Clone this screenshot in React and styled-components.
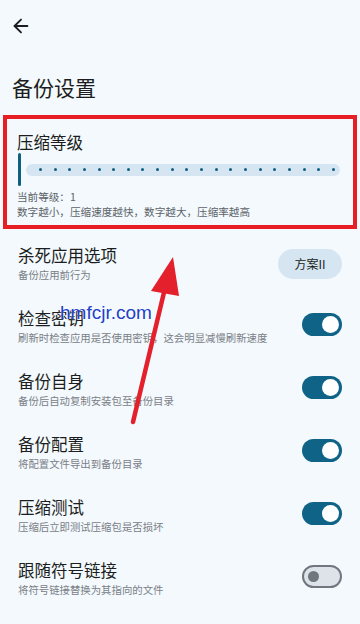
import styled, { createGlobalStyle } from 'styled-components';
import { ArrowLeft } from 'lucide-react';

const GlobalStyle = createGlobalStyle`
  body {
    margin: 0;
    background: #f3f9fd;
    font-family: 'Noto Sans CJK SC', 'Noto Sans', sans-serif;
  }
`;

const options = [
  { title: '检查密钥', desc: '刷新时检查应用是否使用密钥，这会明显减慢刷新速度', on: true },
  { title: '备份自身', desc: '备份后自动复制安装包至备份目录', on: true },
  { title: '备份配置', desc: '将配置文件导出到备份目录', on: true },
  { title: '压缩测试', desc: '压缩后立即测试压缩包是否损坏', on: true },
  { title: '跟随符号链接', desc: '将符号链接替换为其指向的文件', on: false },
];

const App = () => {
  const dots = Array.from({ length: 21 });

  return (
    <StPage>
      <GlobalStyle />
      <StTopBar>
        <ArrowLeft size={22} strokeWidth={2} color='#1b1d20' />
      </StTopBar>
      <StHeading>备份设置</StHeading>

      <StHighlight>
        <StSectionTitle>压缩等级</StSectionTitle>
        <StSlider>
          <StThumb />
          <StTrack>
            {dots.map((_, i) => (
              <StDot key={i} />
            ))}
          </StTrack>
        </StSlider>
        <StHints>
          <div>当前等级：1</div>
          <div>数字越小，压缩速度越快，数字越大，压缩率越高</div>
        </StHints>
      </StHighlight>

      <StList>
        <StRow>
          <StText>
            <StTitle>杀死应用选项</StTitle>
            <StDesc>备份应用前行为</StDesc>
          </StText>
          <StPill>方案II</StPill>
        </StRow>

        {options.map((o) => (
          <StRow key={o.title}>
            <StText>
              <StTitle>{o.title}</StTitle>
              <StDesc>{o.desc}</StDesc>
            </StText>
            <StSwitch $on={o.on}>
              <StKnob $on={o.on} />
            </StSwitch>
          </StRow>
        ))}
      </StList>

      <StWatermark>hmfcjr.com</StWatermark>
      <StArrow width='360' height='624' viewBox='0 0 360 624'>
        <line x1='133' y1='422' x2='166' y2='284' stroke='#e3202b' strokeWidth='4.5' strokeLinecap='round' />
        <polygon points='173,257 151,291 179,296' fill='#e3202b' />
      </StArrow>
    </StPage>
  );
};

export default App;

const StPage = styled.div`
  position: relative;
  width: 360px;
  height: 624px;
  overflow: hidden;
  background: #f3f9fd;
`;

const StTopBar = styled.div`
  display: flex;
  align-items: center;
  height: 52px;
  padding-left: 10px;
`;

const StHeading = styled.h1`
  margin: 0 0 13px;
  padding: 20px 0 0 12px;
  font-size: 21px;
  font-weight: 400;
  line-height: 30px;
  color: #1b1d20;
`;

const StHighlight = styled.div`
  margin: 0 3px;
  border: 4px solid #e81e25;
  padding: 12px 13px 6px 10px;
`;

const StSectionTitle = styled.div`
  font-size: 16.5px;
  line-height: 22px;
  color: #1b1d20;
`;

const StSlider = styled.div`
  display: flex;
  align-items: center;
  gap: 5px;
  height: 33px;
  margin-left: 1px;
`;

const StThumb = styled.div`
  width: 3px;
  height: 33px;
  border-radius: 2px;
  background: #0f5f80;
`;

const StTrack = styled.div`
  flex: 1;
  display: flex;
  align-items: center;
  justify-content: space-between;
  height: 12px;
  padding: 0 5px 0 13px;
  border-radius: 6px;
  background: #d5e5f2;
`;

const StDot = styled.span`
  width: 3px;
  height: 3px;
  border-radius: 50%;
  background: #0f5f80;
`;

const StHints = styled.div`
  margin-top: 4px;
  font-size: 10.6px;
  line-height: 14.5px;
  color: #5d6369;
`;

const StList = styled.div`
  display: flex;
  flex-direction: column;
  margin-top: 3px;
`;

const StRow = styled.div`
  display: flex;
  align-items: center;
  justify-content: space-between;
  height: 63px;
  padding: 0 18px;
`;

const StText = styled.div`
  display: flex;
  flex-direction: column;
  gap: 1px;
`;

const StTitle = styled.div`
  font-size: 16.5px;
  line-height: 22px;
  color: #1b1d20;
`;

const StDesc = styled.div`
  font-size: 10.4px;
  line-height: 16px;
  color: #7a8086;
`;

const StPill = styled.div`
  display: flex;
  align-items: center;
  justify-content: center;
  width: 64px;
  height: 30px;
  border-radius: 15px;
  background: #d5e5f2;
  font-size: 12px;
  color: #1b1d20;
`;

const StSwitch = styled.div`
  display: flex;
  align-items: center;
  justify-content: ${(p) => (p.$on ? 'flex-end' : 'flex-start')};
  box-sizing: border-box;
  width: 40px;
  height: 23px;
  margin-bottom: 5px;
  padding: 0 3px 0 4px;
  border-radius: 12px;
  background: ${(p) => (p.$on ? '#0e6386' : '#dee3ea')};
  border: ${(p) => (p.$on ? 'none' : '2px solid #70777e')};
`;

const StKnob = styled.div`
  width: ${(p) => (p.$on ? '17px' : '11px')};
  height: ${(p) => (p.$on ? '17px' : '11px')};
  border-radius: 50%;
  background: ${(p) => (p.$on ? '#ffffff' : '#70777e')};
`;

const StWatermark = styled.div`
  position: absolute;
  left: 60px;
  top: 302px;
  font-family: 'Liberation Sans', Arial, sans-serif;
  font-size: 19px;
  line-height: 22px;
  color: #1f3fc8;
  text-shadow: 0 0 2px #ffffff;
`;

const StArrow = styled.svg`
  position: absolute;
  left: 0;
  top: 0;
  pointer-events: none;
`;
